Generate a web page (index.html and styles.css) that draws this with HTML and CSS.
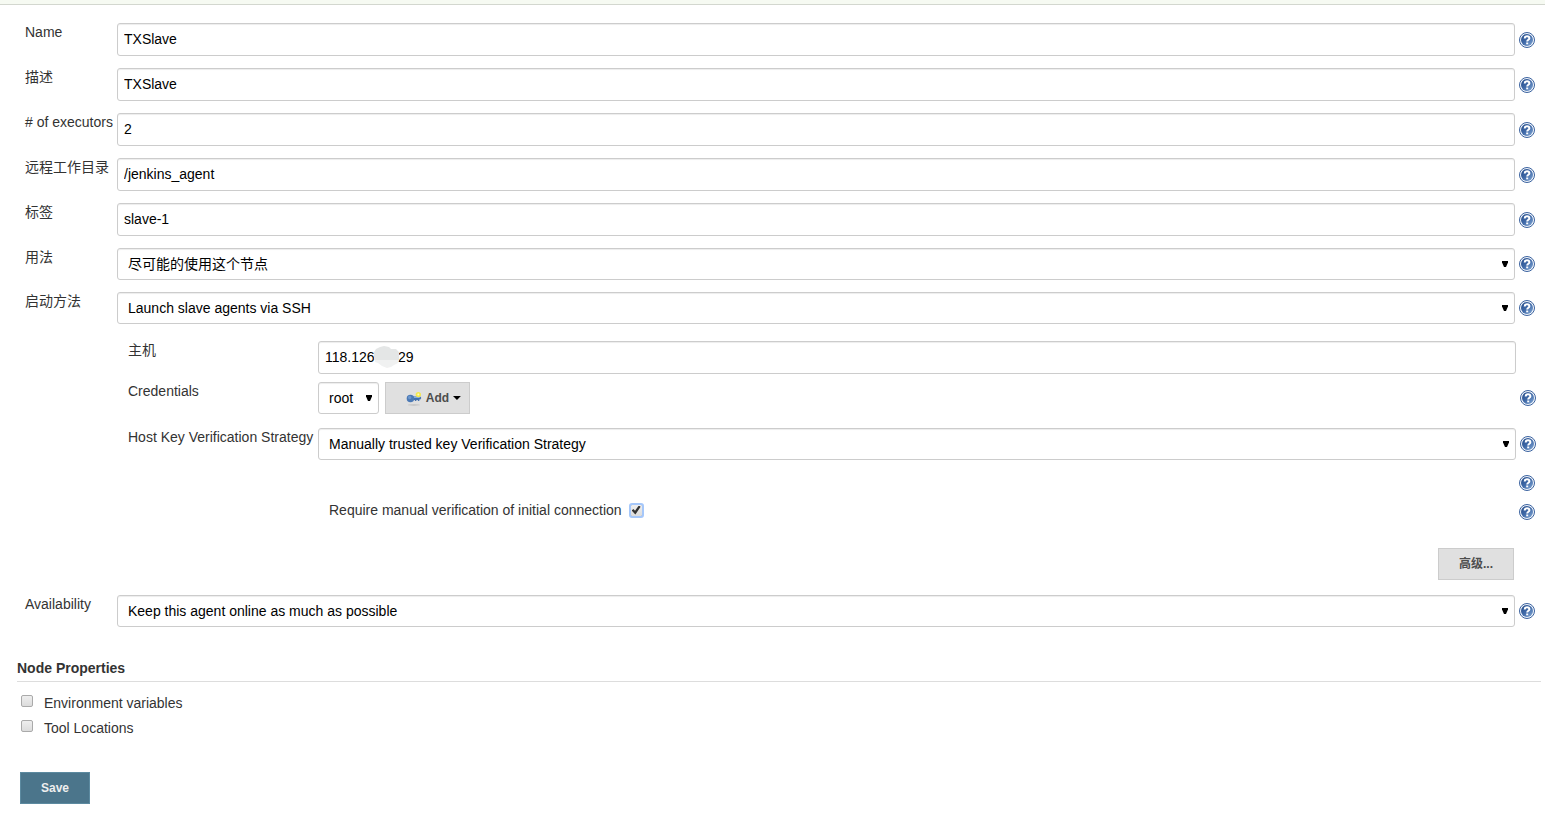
FILE: index.html
```html
<!DOCTYPE html>
<html lang="zh-CN">
<head>
<meta charset="utf-8">
<title>TXSlave Configuration</title>
<link rel="stylesheet" href="styles.css">
</head>
<body>
<svg class="defs" aria-hidden="true">
  <defs>
    <linearGradient id="blue" x1="0" y1="0" x2="1" y2="1">
      <stop offset="0" stop-color="#234a88"/>
      <stop offset=".5" stop-color="#416ba9"/>
      <stop offset="1" stop-color="#86abd8"/>
    </linearGradient>
  </defs>
  <symbol id="help" viewBox="0 0 16 16">
    <circle cx="8" cy="8" r="7.5" fill="#f4f7fb" stroke="#3a629f" stroke-width="1"/>
    <circle cx="8" cy="8" r="6" fill="url(#blue)"/>
    <path d="M5.7 6.4C5.7 4.9 6.700 4.200 8 4.200s2.400.7 2.400 2c0 1.500-2.200 1.500-2.200 3.300" fill="none" stroke="#fff" stroke-width="2"/>
    <rect x="7.200" y="10.500" width="2" height="1.800" fill="#fff"/>
  </symbol>
  <symbol id="arrow" viewBox="0 0 6 6"><path d="M0 0H6V1.500L4 6H2L0 1.500Z" fill="#000"/></symbol>
</svg>
<div class="topbar"></div>
<form class="config">
  <div class="row">
    <label for="name">Name</label>
    <input class="text" id="name" type="text" value="TXSlave">
    <a class="help" href="#" aria-label="Help"><svg><use href="#help"/></svg></a>
  </div>
  <div class="row">
    <label for="desc">描述</label>
    <input class="text" id="desc" type="text" value="TXSlave">
    <a class="help" href="#" aria-label="Help"><svg><use href="#help"/></svg></a>
  </div>
  <div class="row">
    <label for="executors"># of executors</label>
    <input class="text" id="executors" type="text" value="2">
    <a class="help" href="#" aria-label="Help"><svg><use href="#help"/></svg></a>
  </div>
  <div class="row">
    <label for="remote">远程工作目录</label>
    <input class="text" id="remote" type="text" value="/jenkins_agent">
    <a class="help" href="#" aria-label="Help"><svg><use href="#help"/></svg></a>
  </div>
  <div class="row">
    <label for="labels">标签</label>
    <input class="text" id="labels" type="text" value="slave-1">
    <a class="help" href="#" aria-label="Help"><svg><use href="#help"/></svg></a>
  </div>
  <div class="row">
    <label for="usage">用法</label>
    <div class="select"><select id="usage"><option>尽可能的使用这个节点</option></select><svg class="arrow"><use href="#arrow"/></svg></div>
    <a class="help" href="#" aria-label="Help"><svg><use href="#help"/></svg></a>
  </div>
  <div class="row">
    <label for="launch">启动方法</label>
    <div class="select"><select id="launch"><option>Launch slave agents via SSH</option></select><svg class="arrow"><use href="#arrow"/></svg></div>
    <a class="help" href="#" aria-label="Help"><svg><use href="#help"/></svg></a>
  </div>

  <div class="launcher">
    <div class="row inner">
      <label for="host">主机</label>
      <div class="host">
        <input class="text" id="host" type="text" value="118.126      29">
        <svg class="smudge" viewBox="0 0 26 22" aria-hidden="true">
          <path d="M0 14V6L2 3L6 1L10 0L15 1L17 3L22 3L25 6L25 14Z" fill="#e4e6e6"/>
          <path d="M1 14H25L24 17L20 19L17 21L13 22L8 20L4 17L1 16Z" fill="#f0f1f1"/>
        </svg>
      </div>
    </div>
    <div class="row inner credentials">
      <label for="cred">Credentials</label>
      <div class="controls">
        <div class="select short"><select id="cred"><option>root</option></select><svg class="arrow"><use href="#arrow"/></svg></div>
        <button class="button add" type="button">
          <svg class="key" viewBox="0 0 16 16" aria-hidden="true">
            <ellipse cx="8" cy="15" rx="6" ry="1" fill="#c9c9c9"/>
            <path d="M6 6.500H14.500L15.500 8L14.500 9.500H13.500V11H12V10H10.500V11H9V10H6Z" fill="#4270ae"/>
            <path d="M7 7.500H14" stroke="#86aedd" stroke-width="1"/>
            <circle cx="4.500" cy="8.500" r="3.800" fill="#4b79b5"/>
            <circle cx="3.700" cy="7.500" r="1.700" fill="#6c97cd"/>
            <circle cx="12.500" cy="4.500" r="2.700" fill="#f3e84e"/>
            <circle cx="12.500" cy="4.500" r="1" fill="#fffcb8"/>
          </svg>
          <span>Add</span>
          <svg class="caret" viewBox="0 0 8 4" aria-hidden="true"><path d="M0 0H8L4 4Z" fill="#000"/></svg>
        </button>
      </div>
      <a class="help" href="#" aria-label="Help"><svg><use href="#help"/></svg></a>
    </div>
    <div class="row inner">
      <label for="strategy">Host Key Verification Strategy</label>
      <div class="select"><select id="strategy"><option>Manually trusted key Verification Strategy</option></select><svg class="arrow"><use href="#arrow"/></svg></div>
      <a class="help" href="#" aria-label="Help"><svg><use href="#help"/></svg></a>
    </div>
    <div class="strategy-help"><a class="help" href="#" aria-label="Help"><svg><use href="#help"/></svg></a></div>
    <div class="verify">
      <label for="manual">Require manual verification of initial connection</label>
      <input class="check focused" id="manual" type="checkbox" checked>
      <a class="help" href="#" aria-label="Help"><svg><use href="#help"/></svg></a>
    </div>
    <div class="advanced"><button class="button" type="button">高级...</button></div>
  </div>

  <div class="row">
    <label for="avail">Availability</label>
    <div class="select"><select id="avail"><option>Keep this agent online as much as possible</option></select><svg class="arrow"><use href="#arrow"/></svg></div>
    <a class="help" href="#" aria-label="Help"><svg><use href="#help"/></svg></a>
  </div>

  <h2>Node Properties</h2>
  <div class="props">
    <div class="prop"><input class="check" id="env" type="checkbox"><label for="env">Environment variables</label></div>
    <div class="prop"><input class="check" id="tools" type="checkbox"><label for="tools">Tool Locations</label></div>
  </div>
  <button class="button save" type="submit">Save</button>
</form>
</body>
</html>
```
FILE: styles.css
```css
* { box-sizing: border-box; }

body {
  margin: 0;
  background: #fff;
  color: #333;
  font: 14px/18px "Liberation Sans", "Noto Sans CJK SC", sans-serif;
}

svg { display: block; }
.defs { position: absolute; width: 0; height: 0; }

.topbar {
  height: 5px;
  background: #f6faf2;
  border-bottom: 1px solid #d3d7cf;
}

.config { padding-top: 18px; }

.row {
  display: grid;
  grid-template-columns: 92px minmax(0, 1fr) 20px;
  align-items: center;
  margin-bottom: 12px;
  padding: 0 10px 0 25px;
}
.row > label { align-self: start; white-space: nowrap; }
.row > .help { justify-self: end; }
.row.inner {
  grid-template-columns: 190px minmax(0, 1fr) 20px;
  padding: 0 9px 0 128px;
}

.text, select {
  display: block;
  width: 100%;
  margin: 0;
  border: 1px solid #ccc;
  border-radius: 3px;
  background: #fff;
  color: #000;
  font: inherit;
  box-shadow: inset 0 1px 1px rgba(0, 0, 0, .075);
}
.text { height: 33px; padding: 6px 6px 8px; }
select { height: 32px; padding: 0 24px 0 10px; appearance: none; }

.select { display: grid; align-items: center; }
.select > * { grid-area: 1 / 1; }
.arrow {
  width: 6px;
  height: 6px;
  margin-right: 7px;
  justify-self: end;
  pointer-events: none;
}
.short { width: 61px; }

.help, .help svg { display: block; width: 16px; height: 16px; }

.launcher { padding-top: 5px; }
.host { position: relative; }
.smudge { position: absolute; left: 56px; top: 5px; width: 26px; height: 22px; }
.launcher .row:first-child { margin-bottom: 8px; }
.launcher .credentials { margin-bottom: 14px; }
.controls { display: flex; gap: 6px; }

.button {
  height: 32px;
  padding: 0 20px;
  border: 1px solid #ccc;
  border-radius: 0;
  background: #e0e0e0;
  color: #4d4d4d;
  font: bold 12px/18px "Liberation Sans", "Noto Sans CJK SC", sans-serif;
}
.add { display: flex; align-items: center; width: 85px; padding: 0 8px 0 20px; }
.key { width: 16px; height: 16px; margin-right: 4px; }
.caret { width: 8px; height: 4px; margin-left: 4px; }

.strategy-help { display: flex; justify-content: flex-end; padding: 3px 10px 0 0; }
.verify {
  display: flex;
  align-items: center;
  gap: 8px;
  padding: 9px 10px 0 329px;
}
.verify .help { margin: 4px 0 0 auto; }

.check {
  display: grid;
  place-items: center;
  width: 12px;
  height: 12px;
  margin: 0;
  border: 1px solid #aaa;
  border-radius: 2px;
  background: linear-gradient(#eee, #dcdcdc);
  appearance: none;
}
.focused {
  width: 13px;
  height: 13px;
  outline: 2px solid #a5c7fa;
  outline-offset: -1px;
}
.check:checked::before {
  content: "";
  width: 9px;
  height: 9px;
  background: #333;
  clip-path: polygon(0 55%, 20% 38%, 38% 58%, 80% 0, 100% 14%, 42% 100%);
}

.advanced { display: flex; justify-content: flex-end; padding: 28px 31px 15px 0; }

h2 {
  margin: 32px 4px 0 17px;
  padding-bottom: 4px;
  border-bottom: 1px solid #ddd;
  font-size: 14px;
  line-height: 18px;
}
.props { padding: 8px 0 0 21px; }
.prop { display: flex; gap: 11px; height: 25px; align-items: center; }
.prop .check { margin-bottom: 4px; }

.save {
  display: block;
  margin: 32px 0 0 20px;
  border-color: #5c8aa0;
  background: #4b758b;
  color: #eee;
}
```
